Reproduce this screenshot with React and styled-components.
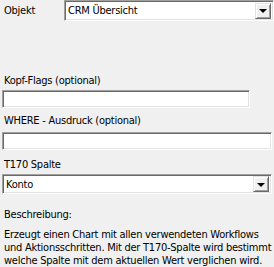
import React from "react"
import styled, { createGlobalStyle } from "styled-components"

const Global = createGlobalStyle`
  body {
    margin: 0;
    background: #f0f0f0;
    font-family: "DejaVu Sans Condensed", "Liberation Sans", sans-serif;
    font-size: 11px;
    letter-spacing: -0.25px;
    color: #000;
  }
`

const Panel = styled.div`
  width: 274px;
  height: 267px;
  background: #f0f0f0;
  overflow: hidden;
  display: flex;
  flex-direction: column;
  padding-left: 2px;
  box-sizing: border-box;
`

const Row = styled.div`
  display: flex;
  align-items: center;
  height: 21px;
`

const Label = styled.div`
  line-height: 13px;
  padding-left: 2px;
  margin-top: ${(p) => p.$top || 0}px;
  margin-bottom: ${(p) => p.$bottom || 0}px;
  white-space: nowrap;
  flex: ${(p) => (p.$grow ? "0 0 60px" : "none")};
`

const Sunken = styled.div`
  box-sizing: border-box;
  width: ${(p) => p.$width}px;
  height: ${(p) => p.$height || 20}px;
  background: #fff;
  border: 1px solid;
  border-color: #a0a0a0 #fff #fff #a0a0a0;
  box-shadow: inset 1px 1px 0 #696969, inset -1px -1px 0 #e3e3e3;
  display: flex;
  align-items: center;
  padding: 0 2px 0 3px;
`

const Value = styled.span`
  flex: 1;
  line-height: 13px;
  white-space: nowrap;
`

const DropButton = styled.div`
  width: 16px;
  height: 16px;
  box-sizing: border-box;
  background: #f0f0f0;
  border: 1px solid;
  border-color: #e3e3e3 #696969 #696969 #e3e3e3;
  box-shadow: inset 1px 1px 0 #fff, inset -1px -1px 0 #a0a0a0;
  display: flex;
  align-items: center;
  justify-content: center;
`

const Arrow = styled.div`
  width: 0;
  height: 0;
  border-left: 4px solid transparent;
  border-right: 4px solid transparent;
  border-top: 4px solid #000;
  margin-top: 1px;
`

const Description = styled.div`
  line-height: 13px;
  padding-left: 2px;
  white-space: nowrap;
`

function Combo({ width, value }) {
  return (
    <Sunken $width={width} $height={21}>
      <Value>{value}</Value>
      <DropButton>
        <Arrow />
      </DropButton>
    </Sunken>
  )
}

export default function App() {
  return (
    <>
      <Global />
      <Panel>
        <Row>
          <Label $grow>Objekt</Label>
          <Combo width={210} value="CRM Übersicht" />
        </Row>
        <Label $top={53} $bottom={3}>Kopf-Flags (optional)</Label>
        <Sunken $width={248} $height={19} />
        <Label $top={6} $bottom={5}>WHERE - Ausdruck (optional)</Label>
        <Sunken $width={270} $height={19} />
        <Label $top={8} $bottom={3}>T170 Spalte</Label>
        <Combo width={270} value="Konto" />
        <Label $top={14} $bottom={7}>Beschreibung:</Label>
        <Description>
          Erzeugt einen Chart mit allen verwendeten Workflows
          <br />
          und Aktionsschritten. Mit der T170-Spalte wird bestimmt
          <br />
          welche Spalte mit dem aktuellen Wert verglichen wird.
        </Description>
      </Panel>
    </>
  )
}
